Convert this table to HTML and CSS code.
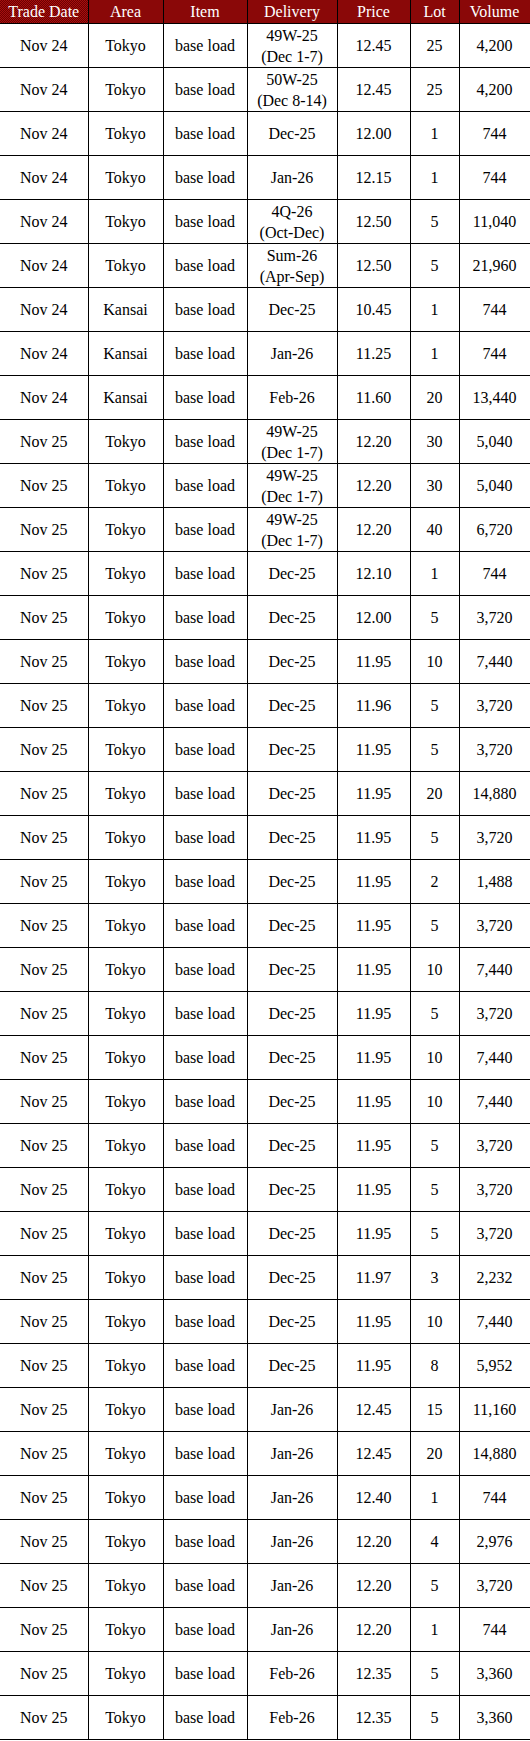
FILE: index.html
```html
<!DOCTYPE html>
<html>
<head>
<meta charset="utf-8">
<link rel="stylesheet" href="styles.css">
</head>
<body>
<table class="trades">
<colgroup>
<col class="c-date"><col class="c-area"><col class="c-item"><col class="c-del"><col class="c-price"><col class="c-lot"><col class="c-vol">
</colgroup>
<thead>
<tr><th>Trade Date</th><th>Area</th><th>Item</th><th>Delivery</th><th>Price</th><th>Lot</th><th>Volume</th></tr>
</thead>
<tbody>
<tr><td>Nov 24</td><td>Tokyo</td><td>base load</td><td>49W-25<br>(Dec 1-7)</td><td>12.45</td><td>25</td><td>4,200</td></tr>
<tr><td>Nov 24</td><td>Tokyo</td><td>base load</td><td>50W-25<br>(Dec 8-14)</td><td>12.45</td><td>25</td><td>4,200</td></tr>
<tr><td>Nov 24</td><td>Tokyo</td><td>base load</td><td>Dec-25</td><td>12.00</td><td>1</td><td>744</td></tr>
<tr><td>Nov 24</td><td>Tokyo</td><td>base load</td><td>Jan-26</td><td>12.15</td><td>1</td><td>744</td></tr>
<tr><td>Nov 24</td><td>Tokyo</td><td>base load</td><td>4Q-26<br>(Oct-Dec)</td><td>12.50</td><td>5</td><td>11,040</td></tr>
<tr><td>Nov 24</td><td>Tokyo</td><td>base load</td><td>Sum-26<br>(Apr-Sep)</td><td>12.50</td><td>5</td><td>21,960</td></tr>
<tr><td>Nov 24</td><td>Kansai</td><td>base load</td><td>Dec-25</td><td>10.45</td><td>1</td><td>744</td></tr>
<tr><td>Nov 24</td><td>Kansai</td><td>base load</td><td>Jan-26</td><td>11.25</td><td>1</td><td>744</td></tr>
<tr><td>Nov 24</td><td>Kansai</td><td>base load</td><td>Feb-26</td><td>11.60</td><td>20</td><td>13,440</td></tr>
<tr><td>Nov 25</td><td>Tokyo</td><td>base load</td><td>49W-25<br>(Dec 1-7)</td><td>12.20</td><td>30</td><td>5,040</td></tr>
<tr><td>Nov 25</td><td>Tokyo</td><td>base load</td><td>49W-25<br>(Dec 1-7)</td><td>12.20</td><td>30</td><td>5,040</td></tr>
<tr><td>Nov 25</td><td>Tokyo</td><td>base load</td><td>49W-25<br>(Dec 1-7)</td><td>12.20</td><td>40</td><td>6,720</td></tr>
<tr><td>Nov 25</td><td>Tokyo</td><td>base load</td><td>Dec-25</td><td>12.10</td><td>1</td><td>744</td></tr>
<tr><td>Nov 25</td><td>Tokyo</td><td>base load</td><td>Dec-25</td><td>12.00</td><td>5</td><td>3,720</td></tr>
<tr><td>Nov 25</td><td>Tokyo</td><td>base load</td><td>Dec-25</td><td>11.95</td><td>10</td><td>7,440</td></tr>
<tr><td>Nov 25</td><td>Tokyo</td><td>base load</td><td>Dec-25</td><td>11.96</td><td>5</td><td>3,720</td></tr>
<tr><td>Nov 25</td><td>Tokyo</td><td>base load</td><td>Dec-25</td><td>11.95</td><td>5</td><td>3,720</td></tr>
<tr><td>Nov 25</td><td>Tokyo</td><td>base load</td><td>Dec-25</td><td>11.95</td><td>20</td><td>14,880</td></tr>
<tr><td>Nov 25</td><td>Tokyo</td><td>base load</td><td>Dec-25</td><td>11.95</td><td>5</td><td>3,720</td></tr>
<tr><td>Nov 25</td><td>Tokyo</td><td>base load</td><td>Dec-25</td><td>11.95</td><td>2</td><td>1,488</td></tr>
<tr><td>Nov 25</td><td>Tokyo</td><td>base load</td><td>Dec-25</td><td>11.95</td><td>5</td><td>3,720</td></tr>
<tr><td>Nov 25</td><td>Tokyo</td><td>base load</td><td>Dec-25</td><td>11.95</td><td>10</td><td>7,440</td></tr>
<tr><td>Nov 25</td><td>Tokyo</td><td>base load</td><td>Dec-25</td><td>11.95</td><td>5</td><td>3,720</td></tr>
<tr><td>Nov 25</td><td>Tokyo</td><td>base load</td><td>Dec-25</td><td>11.95</td><td>10</td><td>7,440</td></tr>
<tr><td>Nov 25</td><td>Tokyo</td><td>base load</td><td>Dec-25</td><td>11.95</td><td>10</td><td>7,440</td></tr>
<tr><td>Nov 25</td><td>Tokyo</td><td>base load</td><td>Dec-25</td><td>11.95</td><td>5</td><td>3,720</td></tr>
<tr><td>Nov 25</td><td>Tokyo</td><td>base load</td><td>Dec-25</td><td>11.95</td><td>5</td><td>3,720</td></tr>
<tr><td>Nov 25</td><td>Tokyo</td><td>base load</td><td>Dec-25</td><td>11.95</td><td>5</td><td>3,720</td></tr>
<tr><td>Nov 25</td><td>Tokyo</td><td>base load</td><td>Dec-25</td><td>11.97</td><td>3</td><td>2,232</td></tr>
<tr><td>Nov 25</td><td>Tokyo</td><td>base load</td><td>Dec-25</td><td>11.95</td><td>10</td><td>7,440</td></tr>
<tr><td>Nov 25</td><td>Tokyo</td><td>base load</td><td>Dec-25</td><td>11.95</td><td>8</td><td>5,952</td></tr>
<tr><td>Nov 25</td><td>Tokyo</td><td>base load</td><td>Jan-26</td><td>12.45</td><td>15</td><td>11,160</td></tr>
<tr><td>Nov 25</td><td>Tokyo</td><td>base load</td><td>Jan-26</td><td>12.45</td><td>20</td><td>14,880</td></tr>
<tr><td>Nov 25</td><td>Tokyo</td><td>base load</td><td>Jan-26</td><td>12.40</td><td>1</td><td>744</td></tr>
<tr><td>Nov 25</td><td>Tokyo</td><td>base load</td><td>Jan-26</td><td>12.20</td><td>4</td><td>2,976</td></tr>
<tr><td>Nov 25</td><td>Tokyo</td><td>base load</td><td>Jan-26</td><td>12.20</td><td>5</td><td>3,720</td></tr>
<tr><td>Nov 25</td><td>Tokyo</td><td>base load</td><td>Jan-26</td><td>12.20</td><td>1</td><td>744</td></tr>
<tr><td>Nov 25</td><td>Tokyo</td><td>base load</td><td>Feb-26</td><td>12.35</td><td>5</td><td>3,360</td></tr>
<tr><td>Nov 25</td><td>Tokyo</td><td>base load</td><td>Feb-26</td><td>12.35</td><td>5</td><td>3,360</td></tr>
</tbody>
</table>
</body>
</html>
```
FILE: styles.css
```css
html, body {
  margin: 0;
  padding: 0;
  background: #fff;
}

.trades {
  border-collapse: collapse;
  table-layout: fixed;
  width: 530px;
  font-family: "Liberation Serif", "Times New Roman", serif;
  font-size: 16px;
  color: #000;
}

.c-date { width: 88px; }
.c-area { width: 75px; }
.c-item { width: 84px; }
.c-del { width: 90px; }
.c-price { width: 73px; }
.c-lot { width: 49px; }
.c-vol { width: 71px; }

.trades th,
.trades td {
  border: 1px solid #000;
  padding: 0;
  text-align: center;
  vertical-align: middle;
}

.trades th:first-child,
.trades td:first-child {
  border-left: 0;
}

.trades th {
  border-top: 0;
  height: 23px;
  line-height: 20px;
  font-weight: normal;
  color: #fff;
  background-color: #8a0a0a;
  background-image: repeating-conic-gradient(#6e0000 0 25%, #a51010 0 50%);
  background-size: 2px 2px;
}

.trades td {
  height: 43px;
  line-height: 21px;
}
```
